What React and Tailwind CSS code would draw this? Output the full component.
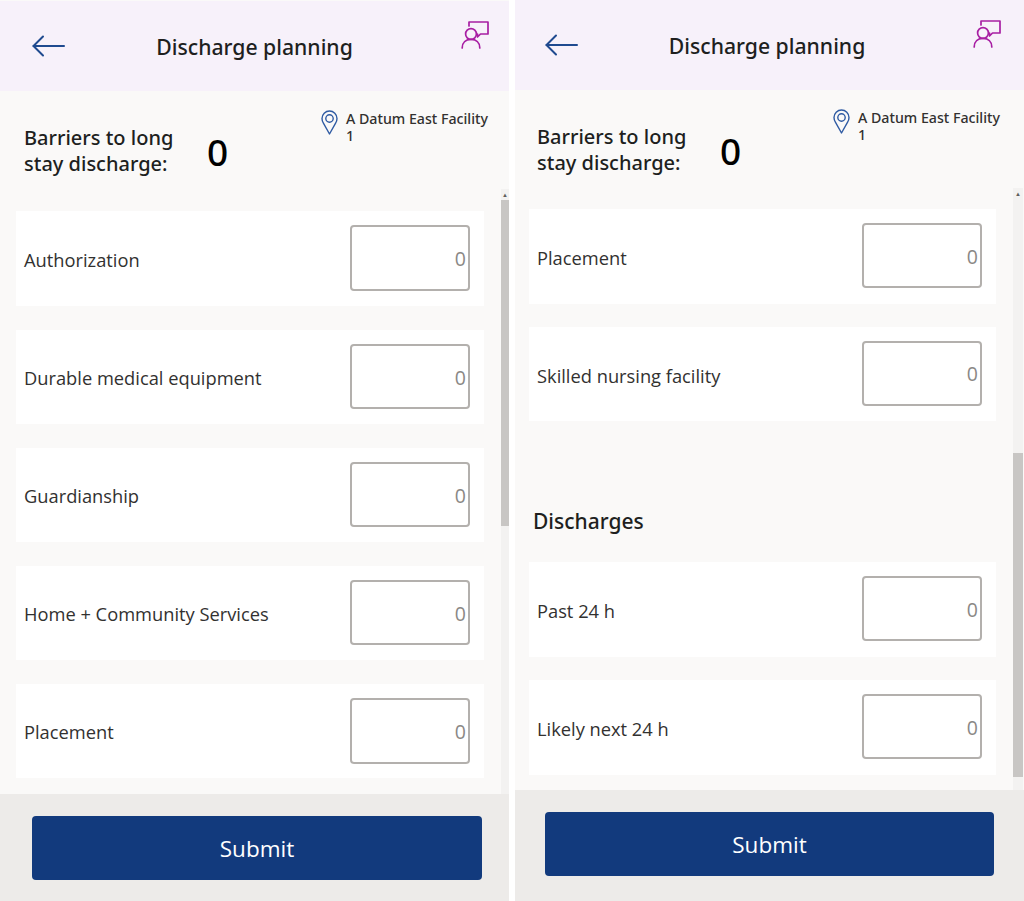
import React from "react";

const font = { fontFamily: '"Open Sans", "Noto Sans", sans-serif' };

function BackArrow() {
  return (
    <svg width="33" height="22" viewBox="0 0 33 22" fill="none" stroke="#1f4a8f" strokeWidth="2" strokeLinecap="round" strokeLinejoin="round">
      <path d="M1.5 11H32" />
      <path d="M11 1.5L1.5 11L11 20.5" />
    </svg>
  );
}

function PersonChat() {
  return (
    <svg width="28" height="28" viewBox="0 0 28 28" fill="none" stroke="#a81fa3" strokeWidth="1.7" strokeLinejoin="round" strokeLinecap="round">
      <path d="M8 5V1H27V13H19.5L16.5 16V13" />
      <circle cx="10" cy="13" r="5.4" />
      <path d="M1.2 27C1.2 21.5 5 18.4 10 18.4C15 18.4 18.8 21.5 18.8 27" />
    </svg>
  );
}

function Pin() {
  return (
    <svg className="mt-px shrink-0" width="17" height="25" viewBox="0 0 17 25" fill="none" stroke="#2f5ba3" strokeWidth="1.4" strokeLinejoin="round">
      <path d="M8.5 24L2.4 13.2C1.4 11.6 1 10.2 1 8.5C1 4.4 4.4 1 8.5 1C12.6 1 16 4.4 16 8.5C16 10.2 15.6 11.6 14.6 13.2L8.5 24Z" />
      <circle cx="8.5" cy="8.5" r="3.7" />
    </svg>
  );
}

function Row({ label, height = "h-[94px]", inputClass = "mb-px h-[65px]", textClass = "mt-[2px]" }) {
  return (
    <div className={`flex items-center justify-between bg-white pl-2 pr-[14px] ${height}`}>
      <span className={`text-[18.3px] leading-6 text-[#323130] ${textClass}`}>{label}</span>
      <div className={`flex w-[120px] items-center justify-end rounded-[4px] border-2 border-[#b3b0ad] bg-white pr-[2px] pt-[2px] text-[19.5px] text-[#8a8886] ${inputClass}`}>
        0
      </div>
    </div>
  );
}

function Panel({ right, thumbClass, footerClass, children }) {
  return (
    <div className={`flex h-[901px] w-[509px] shrink-0 flex-col bg-[#faf9f8] ${right ? "" : "pt-px"}`}>
      <header className={`grid h-[90px] shrink-0 grid-cols-[1fr_auto_1fr] items-center bg-[#f7f1fa] ${right ? "pr-[5px]" : ""}`}>
        <div className={right ? "pl-[30px]" : "pl-8"}><BackArrow /></div>
        <h1 className="pt-[2px] font-['Noto_Sans'] text-[21.2px] font-medium text-[#201f1e]">Discharge planning</h1>
        <div className={`flex justify-end self-start pt-[20px] ${right ? "pr-[18px]" : "pr-5"}`}><PersonChat /></div>
      </header>
      <section className={`flex h-[98px] shrink-0 justify-between ${right ? "pl-[22px] pr-[23px]" : "pl-6 pr-5"}`}>
        <div className="flex items-start pt-[34px]">
          <p className="w-[183px] font-['Noto_Sans'] text-[20px] font-medium leading-[26px] text-[#201f1e]">
            Barriers to long stay discharge:
          </p>
          <span className="mt-[-1px] font-['Noto_Sans'] text-[37px] font-medium leading-[56px] text-black">0</span>
        </div>
        <div className="flex w-[168px] items-start gap-2 pt-[18px]">
          <Pin />
          <p className="pt-px font-['Noto_Sans'] text-[14.2px] font-medium leading-[17px] text-[#323130]">
            A Datum East Facility<br />1
          </p>
        </div>
      </section>
      <div className="flex min-h-0 flex-1">
        <div className={`min-w-0 flex-1 overflow-hidden ${right ? "pl-[14px] pr-[17px]" : "pl-4 pr-[17px]"}`}>{children}</div>
        <div className={`flex shrink-0 flex-col bg-[#f3f2f1] ${right ? "mr-px w-[10px]" : "w-2"}`}>
          <div className="flex h-[11px] shrink-0 items-center justify-center text-[6px] leading-none text-[#605e5c]">▲</div>
          <div className={`bg-[#c8c6c4] ${thumbClass}`} />
        </div>
      </div>
      <footer className={`flex shrink-0 flex-col bg-[#edebe9] ${footerClass}`}>
        <button className="h-[64px] w-full rounded-[4px] bg-[#123a7d] pt-px text-[22.5px] text-white">Submit</button>
      </footer>
    </div>
  );
}

export default function App() {
  const shifted = "mb-[2px] h-[65px]";
  return (
    <div className="flex h-[901px] w-[1024px] gap-[6px] overflow-hidden bg-white" style={font}>
      <Panel thumbClass="h-[326px]" footerClass="h-[107px] pt-[22px] pl-8 pr-[27px]">
        <div className="flex flex-col gap-6 pt-[22px]">
          <Row label="Authorization" height="h-[95px]" inputClass="mb-[2px] h-[66px]" />
          <Row label="Durable medical equipment" />
          <Row label="Guardianship" />
          <Row label="Home + Community Services" />
          <Row label="Placement" inputClass="h-[66px]" />
        </div>
      </Panel>
      <Panel right thumbClass="mt-[254px] h-[324px]" footerClass="h-[111px] pt-[22px] pl-[30px] pr-[30px]">
        <div className="flex flex-col pt-[21px]">
          <Row label="Placement" height="h-[95px]" inputClass={shifted} />
          <div className="h-[23px]" />
          <Row label="Skilled nursing facility" inputClass={shifted} textClass="mt-[4px]" />
          <h2 className="mb-[25px] mt-[84px] pl-1 font-['Noto_Sans'] text-[21px] font-medium leading-8 text-[#201f1e]">Discharges</h2>
          <Row label="Past 24 h" height="h-[95px]" inputClass={shifted} />
          <div className="h-[23px]" />
          <Row label="Likely next 24 h" height="h-[95px]" inputClass={shifted} />
        </div>
      </Panel>
    </div>
  );
}
